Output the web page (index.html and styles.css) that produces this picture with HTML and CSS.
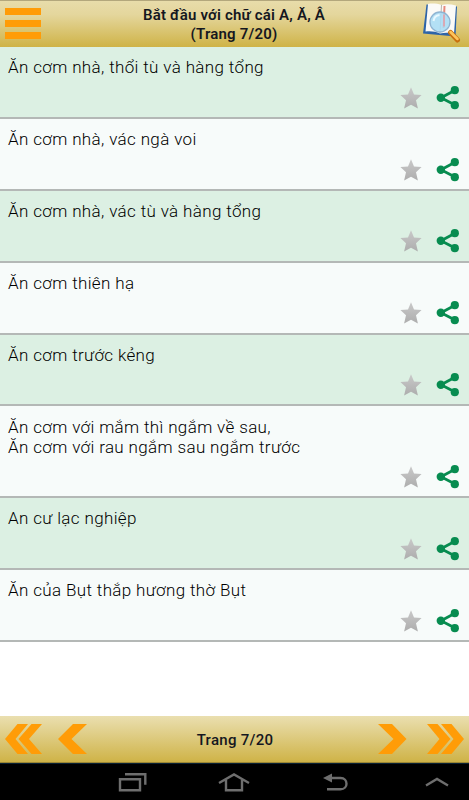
FILE: index.html
```
<!DOCTYPE html>
<html lang="vi">
<head>
  <meta charset="UTF-8" />
  <meta name="viewport" content="width=device-width, initial-scale=1.0"/>
  <title>Trang 7/20</title>
  <link rel="stylesheet" href="styles.css">
</head>
<body>
<!-- icons used in every row -->
<svg class="defs" width="0" height="0">
  <linearGradient id="silver" x1="0" y1="0" x2="0" y2="1">
    <stop offset="0" stop-color="#c9c9c9"/>
    <stop offset="1" stop-color="#adadad"/>
  </linearGradient>
  <symbol id="star" viewBox="0 0 22 22">
    <path fill="url(#silver)" d="M11 .2l3 7.200 7.600.700-5.600 5.200 1.900 8.300L11 17.800l-6.900 3.800L6 13.300.4 8.100 8 7.400z"/>
  </symbol>
  <symbol id="share" viewBox="0 0 24 24">
    <path fill="none" stroke="#078c50" stroke-width="2.8" d="M19 4.300L5 11.700l14 7.400"/>
    <circle fill="#078c50" cx="4.800" cy="11.700" r="4.200"/>
    <circle fill="#078c50" cx="18.800" cy="4.200" r="4.100"/>
    <circle fill="#078c50" cx="18.800" cy="19.200" r="4.100"/>
  </symbol>
</svg>

<header class="topbar">
  <div class="menu"><span></span><span></span><span></span></div>
  <h1>Bắt đầu với chữ cái A, Ă, Â<br>(Trang 7/20)</h1>
  <svg class="search" width="40" height="42" viewBox="0 0 40 42">
    <path fill="#2e64a8" d="M5.500 3.500L36 5.500l-1.500 30L2 32.500z"/>
    <path fill="#fbfaf7" d="M7 3c4-.8 9-.5 13.500 1 4-1 9-1 14.500.500L33 33c-5-1.500-9-1.500-14-.500-4-2-9-2.500-14.500-2z"/>
    <path fill="none" stroke="#b9b5ad" d="M20.500 4L19 32"/>
    <path fill="none" stroke="#e78b7d" stroke-width="2" d="M23.500 5l-1 22"/>
    <path stroke="#c8700e" stroke-width="5" stroke-linecap="round" d="M29.500 31.500l7 7.500"/>
    <path stroke="#ffc45b" stroke-width="2.500" stroke-linecap="round" d="M29.500 31l7 7"/>
    <circle cx="19" cy="21" r="10" fill="#a9dcf5" fill-opacity=".88" stroke="#8fb4d2" stroke-width="1.300"/>
    <path fill="none" stroke="#e9f8ff" stroke-width="2" d="M12.500 20a7 7 0 0 1 6-6"/>
    <path fill="none" stroke="#d9a9b5" stroke-width="2" d="M23 13.500v12"/>
  </svg>
</header>

<ul class="list">
  <li>
    <p>Ăn cơm nhà, thổi tù và hàng tổng</p>
    <div class="actions"><svg class="star"><use href="#star"/></svg><svg class="share"><use href="#share"/></svg></div>
  </li>
  <li>
    <p>Ăn cơm nhà, vác ngà voi</p>
    <div class="actions"><svg class="star"><use href="#star"/></svg><svg class="share"><use href="#share"/></svg></div>
  </li>
  <li>
    <p>Ăn cơm nhà, vác tù và hàng tổng</p>
    <div class="actions"><svg class="star"><use href="#star"/></svg><svg class="share"><use href="#share"/></svg></div>
  </li>
  <li>
    <p>Ăn cơm thiên hạ</p>
    <div class="actions"><svg class="star"><use href="#star"/></svg><svg class="share"><use href="#share"/></svg></div>
  </li>
  <li>
    <p>Ăn cơm trước kẻng</p>
    <div class="actions"><svg class="star"><use href="#star"/></svg><svg class="share"><use href="#share"/></svg></div>
  </li>
  <li>
    <p>Ăn cơm với mắm thì ngắm về sau,<br>Ăn cơm với rau ngắm sau ngắm trước</p>
    <div class="actions"><svg class="star"><use href="#star"/></svg><svg class="share"><use href="#share"/></svg></div>
  </li>
  <li>
    <p>An cư lạc nghiệp</p>
    <div class="actions"><svg class="star"><use href="#star"/></svg><svg class="share"><use href="#share"/></svg></div>
  </li>
  <li>
    <p>Ăn của Bụt thắp hương thờ Bụt</p>
    <div class="actions"><svg class="star"><use href="#star"/></svg><svg class="share"><use href="#share"/></svg></div>
  </li>
</ul>

<footer class="pager">
  <svg width="88" height="30" viewBox="0 0 88 30">
    <path d="M17.500 0h10.500L15.500 15l12.500 15H17.500L5 15z"/>
    <path d="M31.500 0h10.500L29 15l13 15H31.500L18.500 15z"/>
    <path d="M73 0h14L71.500 15 87 30H73L58 15z"/>
  </svg>
  <span>Trang 7/20</span>
  <svg width="88" height="30" viewBox="0 0 88 30">
    <path d="M14 0H0L15.500 15 0 30h14l14.500-15z"/>
    <path d="M59.500 0H49l12.500 15L49 30h10.500l13-15z"/>
    <path d="M73.500 0H63l12.500 15L63 30h10.500L86 15z"/>
  </svg>
</footer>

<nav class="navbar">
  <svg width="30" height="20" viewBox="0 0 30 20">
    <path d="M2 7.300h20v11H2zM7 2.300h20.300v10.500"/>
  </svg>
  <svg width="32" height="20" viewBox="0 0 32 20">
    <path d="M1 11L16 2.500 31 11M8 8v10.300h16V8"/>
  </svg>
  <svg width="26" height="20" viewBox="0 0 26 20">
    <path d="M7 6h10.500c8 0 8 11.300 0 11.300H4"/>
    <path class="tip" d="M0 6l9-4.500v9z"/>
  </svg>
  <svg width="24" height="20" viewBox="0 0 24 20">
    <path d="M1 13.500l11-6.500 11 6.500"/>
  </svg>
</nav>
</body>
</html>
```

FILE: styles.css
```
* {
  box-sizing: border-box;
}
body {
  font-family: Roboto, "Noto Sans", sans-serif;
  margin: 0;
  height: 800px;
  display: flex;
  flex-direction: column;
  background-color: #fff;
  overflow: hidden;
}
.defs {
  position: absolute;
}
.topbar {
  height: 47px;
  flex: none;
  display: flex;
  justify-content: space-between;
  align-items: flex-start;
  padding: 0 8px 0 5px;
  border-top: 1px solid #b3a77c;
  background: linear-gradient(#e8dcaa, #e4d69c 30%, #cfb347);
}
.menu {
  width: 42px;
  padding: 7px 0 0;
  display: flex;
  flex-direction: column;
  gap: 5px;
}
.menu span {
  width: 36px;
  height: 7px;
  background-color: #ff9c07;
}
.topbar h1 {
  margin: 5px 0 0;
  font-size: 15px;
  line-height: 19px;
  font-weight: 600;
  letter-spacing: 0.2px;
  text-align: center;
  color: #15171f;
}
.list {
  list-style: none;
  margin: 0;
  padding: 0;
  flex: 1;
}
.list li {
  min-height: 71.9px;
  padding: 10.1px 9px 7px 8px;
  border-bottom: 2px solid #b4b8b6;
  background-color: #f7fbfa;
}
.list li:nth-child(odd) {
  background-color: #dcf0e3;
}
.list p {
  margin: 0;
  font-size: 17px;
  line-height: 20px;
  font-weight: 300;
  letter-spacing: 0.36px;
  color: #000;
}
.actions {
  display: flex;
  justify-content: flex-end;
  align-items: center;
  gap: 14px;
  height: 24px;
  margin-top: 8.6px;
}
.star {
  width: 22px;
  height: 22px;
}
.share {
  width: 24px;
  height: 24px;
}
.pager {
  height: 47px;
  flex: none;
  display: flex;
  justify-content: space-between;
  align-items: center;
  font-size: 15px;
  font-weight: 500;
  letter-spacing: 0.3px;
  color: #15171f;
  border-bottom: 1px solid #9c8736;
  background: linear-gradient(#eadfb0, #cfb347);
}
.pager path {
  fill: #ff9c07;
}
.pager svg:last-child {
  margin-right: 3px;
}
.pager span {
  padding: 2px 0 0 4px;
}
.navbar {
  height: 37px;
  flex: none;
  display: flex;
  justify-content: space-between;
  padding: 8px 20px 0 118px;
  background-color: #000;
  border-top: 1px solid #0b2233;
}
.navbar path {
  fill: none;
  stroke: #6e6e6e;
  stroke-width: 2.4;
}
.navbar svg:nth-child(2),
.navbar svg:nth-child(3) {
  margin-right: 3px;
  margin-left: -3px;
}
.navbar .tip {
  fill: #6e6e6e;
  stroke: none;
}
```
